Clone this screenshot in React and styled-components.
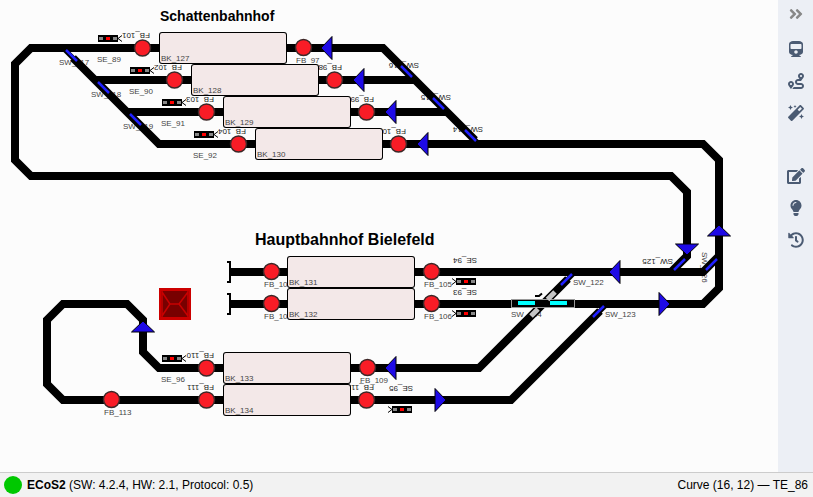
import React from "react";
import styled, { createGlobalStyle } from "styled-components";
import {
  FaAngleDoubleRight,
  FaTrain,
  FaRoute,
  FaMagic,
  FaEdit,
  FaLightbulb,
  FaHistory,
} from "react-icons/fa";

const GlobalStyle = createGlobalStyle`
  body {
    margin: 0;
    font-family: "Liberation Sans", Arial, sans-serif;
    font-size: 12px;
    color: #000;
  }
`;

const Page = styled.div`
  display: flex;
  flex-direction: column;
  height: 100vh;
`;

const Workspace = styled.div`
  display: flex;
  flex: 1;
  min-height: 0;
`;

const PlanArea = styled.main`
  flex: 1;
  min-width: 0;
  overflow: hidden;
  background: #fcfcfc;
`;

const Plan = styled.svg`
  display: block;
`;

const PlanTitle = styled.text`
  font-size: ${(p) => p.$size}px;
  font-weight: bold;
`;

const Label = styled.text`
  font-size: 8px;
  fill: ${(p) => (p.$dark ? "#1c1c1c" : "#444")};
`;

const Sidebar = styled.nav`
  display: flex;
  flex-direction: column;
  width: 35px;
  background: #eceff5;
`;

const ToolButton = styled.button`
  display: flex;
  align-items: center;
  justify-content: center;
  height: ${(p) => (p.$toggle ? 28 : 32)}px;
  margin-top: ${(p) => p.$gap || 0}px;
  padding: 0;
  border: 0;
  background: none;
  color: ${(p) => (p.$toggle ? "#888" : "#4b5b73")};
  cursor: pointer;

  svg {
    flex: none;
    width: 18px;
    height: 16px;
  }
`;

const StatusBar = styled.footer`
  display: flex;
  align-items: center;
  gap: 5px;
  height: 24px;
  padding: 0 5px 0 4px;
  border-top: 1px solid #ccc;
  background: #f2f2f2;
  line-height: 24px;
  white-space: nowrap;
`;

const StatusLight = styled.span`
  width: 18px;
  height: 18px;
  border-radius: 50%;
  background: #00c800;
`;

const Selection = styled.span`
  margin-left: auto;
`;

const tracks = [
  "M475 140L383 48H31L15 64V160L31 176H671L687 192V256L671 272",
  "M73 58L159 144H703L719 160V288L703 304H231",
  "M95 80H415",
  "M127 112H447",
  "M231 272H703L719 256",
  "M568 279L479 368H159L143 352V320L127 304H63L47 320V384L63 400H511L600 311",
];

const switchTips = [
  "M64 49L75 60",
  "M383 48L479 144",
  "M479 368L574 273",
  "M511 400L606 305",
];

const switches = [
  [66, 50, 77, 61],
  [98, 82, 109, 93],
  [130, 114, 141, 125],
  [401, 66, 412, 77],
  [433, 98, 444, 109],
  [465, 130, 476, 141],
  [561, 285, 572, 274],
  [593, 317, 604, 306],
  [674, 270, 685, 259],
  [706, 270, 717, 259],
];

const blocks = [
  ["BK_127", 159, 32],
  ["BK_128", 191, 64],
  ["BK_129", 223, 96],
  ["BK_130", 255, 128],
  ["BK_131", 287, 256],
  ["BK_132", 287, 288],
  ["BK_133", 223, 352],
  ["BK_134", 223, 384],
];

const sensors = [
  [142.5, 48],
  [174.5, 80],
  [206.5, 112],
  [238.5, 144],
  [303.5, 47.5],
  [334.5, 80],
  [366.5, 112],
  [398.5, 144],
  [271.5, 271.5],
  [271.5, 303.5],
  [431.5, 271.5],
  [431.5, 303.5],
  [206.5, 368],
  [206.5, 400],
  [367.5, 367.5],
  [366.5, 400],
  [111.5, 399.5],
];

const arrows = [
  [327, 48, 180],
  [359, 80, 180],
  [391, 112, 180],
  [423, 144, 180],
  [615, 272, 180],
  [391, 368, 180],
  [664, 304, 0],
  [440, 400, 0],
  [719, 231, 270],
  [143, 327, 270],
  [687, 249, 90],
];

const signals = [
  [98, 35],
  [130, 67],
  [162, 99],
  [194, 131],
  [162, 355],
  [456, 278, true],
  [456, 310, true],
  [392, 406, true],
];

const labels = [
  ["SW_117", 59, 65],
  ["SW_118", 91, 97],
  ["SW_119", 123, 129],
  ["SE_89", 97, 62],
  ["SE_90", 129, 94],
  ["SE_91", 161, 126],
  ["SE_92", 193, 158],
  ["SE_96", 161, 382],
  ["FB_97", 296, 63],
  ["FB_103", 264, 287],
  ["FB_104", 264, 319],
  ["FB_105", 424, 287],
  ["FB_106", 424, 319],
  ["FB_109", 360, 383],
  ["FB_113", 104, 415],
  ["SW_122", 573, 285],
  ["SW_123", 605, 317],
  ["SW_124", 511, 317],
  ["SW_126", 702, 252, 90],
  ["FB_101", 150, 33, 180],
  ["FB_102", 182, 65, 180],
  ["FB_103", 214, 97, 180],
  ["FB_104", 246, 129, 180],
  ["FB_98", 342, 65, 180],
  ["FB_99", 374, 97, 180],
  ["FB_100", 406, 129, 180],
  ["FB_110", 214, 353, 180],
  ["FB_111", 214, 385, 180],
  ["FB_112", 374, 385, 180],
  ["SW_116", 419, 63, 180],
  ["SW_115", 451, 95, 180],
  ["SW_114", 483, 127, 180],
  ["SE_94", 477, 258, 180],
  ["SE_93", 477, 290, 180],
  ["SE_95", 413, 386, 180],
  ["SW_125", 673, 259, 180],
];

function Signal({ x, y, flipped }) {
  return (
    <g transform={flipped ? `rotate(180 ${x + 10} ${y + 3.5})` : undefined}>
      <rect x={x} y={y} width="20" height="7" />
      <rect x={x + 1} y={y + 2} width="4" height="3" fill="#888" />
      <rect x={x + 8} y={y + 2} width="4" height="3" fill="#f00" />
      <rect x={x + 15} y={y + 2} width="4" height="3" fill="#888" />
      <path
        d={`M${x + 20} ${y + 3.5}l4 -3M${x + 20} ${y + 3.5}l4 3`}
        stroke="#000"
      />
    </g>
  );
}

function Block({ name, x, y }) {
  return (
    <g>
      <rect x={x} y={y} width="128" height="32" rx="3" />
      <rect x={x + 1} y={y + 1} width="126" height="30" rx="2" fill="#f3e8e8" />
      <Label x={x + 2} y={y + 29}>
        {name}
      </Label>
    </g>
  );
}

function DoubleSlip() {
  return (
    <g>
      <rect x="511.5" y="299.5" width="63" height="8" fill="none" stroke="#999" />
      <rect x="518" y="301" width="17" height="4" fill="#00ffff" />
      <rect x="550" y="301" width="17" height="4" fill="#00ffff" />
      <path
        d="M547.500 299.500L555 292M531 316L538 309"
        stroke="#c4c4c4"
        strokeWidth="5"
      />
      <path d="M535 296H539L542 293.500" fill="none" stroke="#000" strokeWidth="2" />
    </g>
  );
}

function Roof() {
  return (
    <g>
      <rect x="159" y="288" width="32" height="32" fill="#cc0000" />
      <rect x="161" y="291" width="28" height="26" fill="#780000" />
      <path
        d="M162 292L170 304L162 316M188 292L179 304L188 316M170 304H179M162 291V317M188 291V317"
        fill="none"
        stroke="#c80000"
        strokeWidth="1.5"
      />
    </g>
  );
}

function TrackPlan() {
  return (
    <Plan width="776" height="440" role="img" aria-label="Track plan">
      {labels.map(([name, x, y, turn]) => (
        <Label
          key={`${name}-${x}`}
          x={x}
          y={y}
          $dark={turn === 180}
          transform={turn ? `rotate(${turn} ${x} ${y})` : undefined}
        >
          {name}
        </Label>
      ))}
      <g fill="none" stroke="#000" strokeWidth="8">
        {tracks.map((d) => (
          <path key={d} d={d} />
        ))}
      </g>
      <g stroke="#000" strokeWidth="5">
        {switchTips.map((d) => (
          <path key={d} d={d} />
        ))}
      </g>
      <path d="M227 262H230V282H227M227 294H230V314H227" fill="none" stroke="#000" strokeWidth="2" />
      <g stroke="#2020ff" strokeWidth="2.5">
        {switches.map(([x1, y1, x2, y2]) => (
          <line key={`${x1}-${y1}`} x1={x1} y1={y1} x2={x2} y2={y2} />
        ))}
      </g>
      <DoubleSlip />
      {signals.map(([x, y, flipped]) => (
        <Signal key={`${x}-${y}`} x={x} y={y} flipped={flipped} />
      ))}
      {blocks.map(([name, x, y]) => (
        <Block key={name} name={name} x={x} y={y} />
      ))}
      <g fill="#1e0ae6" stroke="#000">
        {arrows.map(([x, y, turn]) => (
          <path
            key={`${x}-${y}`}
            d="M-5 -11.500L6 0L-5 11.500Z"
            transform={`translate(${x} ${y}) rotate(${turn})`}
          />
        ))}
      </g>
      <g fill="#f91c26" stroke="#3c2828" strokeWidth="1.5">
        {sensors.map(([x, y]) => (
          <circle key={`${x}-${y}`} cx={x} cy={y} r="8" />
        ))}
      </g>
      <Roof />
      <PlanTitle x="160" y="21" $size={14}>
        Schattenbahnhof
      </PlanTitle>
      <PlanTitle x="255" y="245" $size={16}>
        Hauptbahnhof Bielefeld
      </PlanTitle>
    </Plan>
  );
}

const tools = [
  { name: "Locomotives", Icon: FaTrain, gap: 5 },
  { name: "Routes", Icon: FaRoute },
  { name: "Automation", Icon: FaMagic },
  { name: "Edit plan", Icon: FaEdit, gap: 31 },
  { name: "Lights", Icon: FaLightbulb },
  { name: "History", Icon: FaHistory },
];

export default function App() {
  return (
    <Page>
      <GlobalStyle />
      <Workspace>
        <PlanArea>
          <TrackPlan />
        </PlanArea>
        <Sidebar>
          <ToolButton $toggle aria-label="Collapse sidebar">
            <FaAngleDoubleRight />
          </ToolButton>
          {tools.map(({ name, Icon, gap }) => (
            <ToolButton key={name} aria-label={name} $gap={gap}>
              <Icon />
            </ToolButton>
          ))}
        </Sidebar>
      </Workspace>
      <StatusBar>
        <StatusLight />
        <span>
          <b>ECoS2</b> (SW: 4.2.4, HW: 2.1, Protocol: 0.5)
        </span>
        <Selection>Curve (16, 12) — TE_86</Selection>
      </StatusBar>
    </Page>
  );
}
